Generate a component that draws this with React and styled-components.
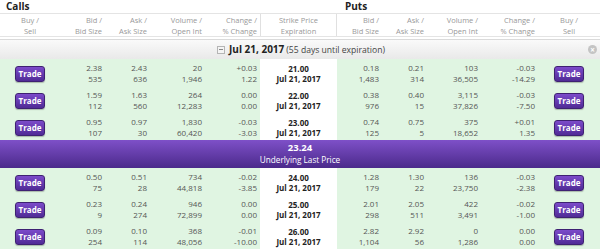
import React from 'react'
import styled, { createGlobalStyle } from 'styled-components'

const GlobalStyle = createGlobalStyle`
  html, body {
    margin: 0;
    padding: 0;
    background: #fff;
  }
  body {
    font-family: "Open Sans", "Liberation Sans", sans-serif;
  }
`

const COLS = '60px 45px 45px 55px 55px 77px 45px 45px 54px 57px 62px'

const Chain = styled.div`
  width: 600px;
  height: 251px;
  overflow: hidden;
  background: #fff;
`

const TitleRow = styled.div`
  display: grid;
  grid-template-columns: 337px 263px;
  height: 13px;
`

const SideTitle = styled.div`
  font-size: 10px;
  line-height: 13px;
  font-weight: 700;
  color: #222;
  padding-left: ${props => props.$inset}px;
`

const HeaderRow = styled.div`
  display: grid;
  grid-template-columns: ${COLS};
  height: 22px;
  border-top: 1px solid #e4e4e4;
  border-bottom: 1px solid #e4e4e4;
`

const HeadCell = styled.div`
  font-size: 7.5px;
  line-height: 10.5px;
  color: #999;
  padding-top: 1px;
  text-align: ${props => props.$align || 'right'};
  padding-right: ${props => (props.$align ? 0 : 3)}px;
  ${props => props.$strike && `
    border-left: 1px solid #e0e0e0;
    border-right: 1px solid #e0e0e0;
  `}
`

const ExpirationBar = styled.div`
  margin-top: 2px;
  height: 19px;
  border-top: 1px solid #dadada;
  background: linear-gradient(#fafafa, #e9e9e9);
  display: grid;
  grid-template-columns: 1fr auto 1fr;
  align-items: center;
`

const ExpirationLabel = styled.div`
  grid-column: 2;
  display: flex;
  align-items: center;
  gap: 4px;
  padding-left: 2px;
`

const CollapseBox = styled.span`
  width: 6px;
  height: 6px;
  border: 1px solid #b5b5b5;
  background: #f4f4f4;
  display: flex;
  align-items: center;
  justify-content: center;
  &::after {
    content: '';
    width: 4px;
    height: 1px;
    background: #888;
  }
`

const ExpDate = styled.span`
  font-size: 10px;
  font-weight: 700;
  color: #222;
  line-height: 19px;
`

const ExpNote = styled.span`
  font-size: 8.6px;
  color: #444;
  margin-left: -2px;
  padding-top: 1px;
`

const CloseDot = styled.span`
  grid-column: 3;
  justify-self: end;
  margin-right: 3px;
  width: 9px;
  height: 9px;
  border-radius: 50%;
  background: #c4c4c4;
  display: flex;
  align-items: center;
  justify-content: center;
  color: #fff;
  font-size: 8px;
  line-height: 9px;
  font-weight: 700;
`

const OptionRow = styled.div`
  display: grid;
  grid-template-columns: ${COLS};
  height: 27px;
  background: #e0f5e2;
`

const NumCell = styled.div`
  font-size: 8px;
  line-height: 10.5px;
  color: #555;
  text-align: right;
  padding-right: 3px;
  padding-top: 4px;
`

const StrikeCell = styled.div`
  background: #fff;
  font-size: 8px;
  line-height: 10px;
  font-weight: 700;
  color: #222;
  text-align: center;
  padding-top: 5px;
`

const ActionCell = styled.div`
  display: flex;
  justify-content: center;
  padding-top: 7px;
`

const TradeButton = styled.button`
  width: 30px;
  height: 16px;
  padding: 0;
  border: 1px solid #3e2172;
  border-radius: 3px;
  background: linear-gradient(#7c4bca, #502b96);
  box-shadow: 0 1px 1px rgba(0, 0, 0, 0.25);
  color: #fff;
  font-family: "Open Sans", "Liberation Sans", sans-serif;
  font-size: 8px;
  font-weight: 700;
  line-height: 14px;
`

const PriceBar = styled.div`
  height: 28px;
  background: linear-gradient(#7e50c8, #4b2a8b);
  color: #fff;
  display: flex;
  flex-direction: column;
  align-items: center;
  justify-content: center;
`

const PriceValue = styled.div`
  font-size: 9.5px;
  font-weight: 700;
  line-height: 12px;
`

const PriceLabel = styled.div`
  font-size: 8.2px;
  line-height: 12px;
`

const headers = [
  ['Buy /', 'Sell', 'center'],
  ['Bid /', 'Bid Size'],
  ['Ask /', 'Ask Size'],
  ['Volume /', 'Open Int'],
  ['Change /', '% Change'],
  ['Strike Price', 'Expiration', 'center', true],
  ['Bid /', 'Bid Size'],
  ['Ask /', 'Ask Size'],
  ['Volume /', 'Open Int'],
  ['Change /', '% Change'],
  ['Buy /', 'Sell', 'center']
]

const above = [
  { strike: '21.00', call: [['2.38', '535'], ['2.43', '636'], ['20', '1,946'], ['+0.03', '1.22']], put: [['0.18', '1,483'], ['0.21', '314'], ['103', '36,505'], ['-0.03', '-14.29']] },
  { strike: '22.00', call: [['1.59', '112'], ['1.63', '560'], ['264', '12,283'], ['0.00', '0.00']], put: [['0.38', '976'], ['0.40', '15'], ['3,115', '37,826'], ['-0.03', '-7.50']] },
  { strike: '23.00', call: [['0.95', '107'], ['0.97', '30'], ['1,830', '60,420'], ['-0.03', '-3.03']], put: [['0.74', '125'], ['0.75', '5'], ['375', '18,652'], ['+0.01', '1.35']] }
]

const below = [
  { strike: '24.00', call: [['0.50', '75'], ['0.51', '28'], ['734', '44,818'], ['-0.02', '-3.85']], put: [['1.28', '179'], ['1.30', '22'], ['136', '23,750'], ['-0.03', '-2.38']] },
  { strike: '25.00', call: [['0.23', '9'], ['0.24', '274'], ['946', '72,899'], ['0.00', '0.00']], put: [['2.01', '298'], ['2.05', '511'], ['422', '3,491'], ['-0.02', '-1.00']] },
  { strike: '26.00', call: [['0.09', '254'], ['0.10', '114'], ['368', '48,056'], ['-0.01', '-10.00']], put: [['2.82', '1,104'], ['2.92', '56'], ['0', '1,286'], ['0.00', '0.00']] }
]

const Pair = ({ top, bottom }) => (
  <>
    {top}
    <br />
    {bottom}
  </>
)

const Row = ({ row }) => (
  <OptionRow>
    <ActionCell><TradeButton>Trade</TradeButton></ActionCell>
    {row.call.map(([a, b], i) => (
      <NumCell key={'c' + i}><Pair top={a} bottom={b} /></NumCell>
    ))}
    <StrikeCell><Pair top={row.strike} bottom="Jul 21, 2017" /></StrikeCell>
    {row.put.map(([a, b], i) => (
      <NumCell key={'p' + i}><Pair top={a} bottom={b} /></NumCell>
    ))}
    <ActionCell><TradeButton>Trade</TradeButton></ActionCell>
  </OptionRow>
)

const App = () => (
  <Chain>
    <GlobalStyle />
    <TitleRow>
      <SideTitle $inset={6}>Calls</SideTitle>
      <SideTitle $inset={8}>Puts</SideTitle>
    </TitleRow>
    <HeaderRow>
      {headers.map(([a, b, align, strike], i) => (
        <HeadCell key={i} $align={align} $strike={strike}>
          <Pair top={a} bottom={b} />
        </HeadCell>
      ))}
    </HeaderRow>
    <ExpirationBar>
      <ExpirationLabel>
        <CollapseBox />
        <ExpDate>Jul 21, 2017</ExpDate>
        <ExpNote>(55 days until expiration)</ExpNote>
      </ExpirationLabel>
      <CloseDot>×</CloseDot>
    </ExpirationBar>
    {above.map(r => <Row key={r.strike} row={r} />)}
    <PriceBar>
      <PriceValue>23.24</PriceValue>
      <PriceLabel>Underlying Last Price</PriceLabel>
    </PriceBar>
    {below.map(r => <Row key={r.strike} row={r} />)}
  </Chain>
)

export default App
